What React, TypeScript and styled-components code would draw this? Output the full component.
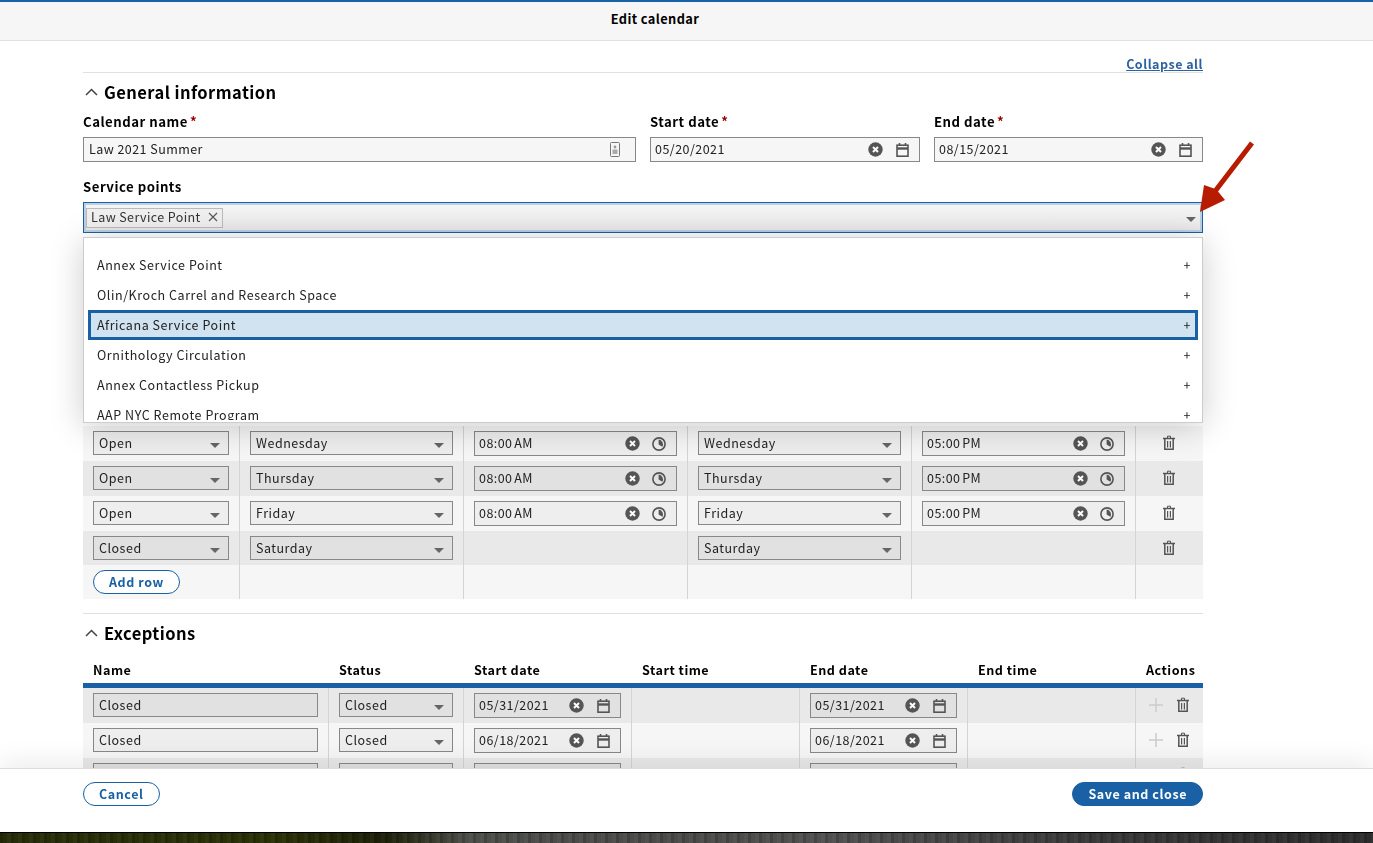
import React from 'react'
import styled, { createGlobalStyle } from 'styled-components'

const BLUE = '#1960a4'

const GlobalStyle = createGlobalStyle`
  html, body, #root {
    margin: 0;
    height: 100%;
    overflow: hidden;
    background: #fff;
  }
  * {
    box-sizing: border-box;
  }
  body {
    font-family: "Noto Sans CJK SC", "Noto Sans", sans-serif;
    font-size: 12.5px;
    letter-spacing: 0.5px;
    color: #222;
  }
`

const Page = styled.div`
  position: relative;
  display: flex;
  flex-direction: column;
  height: 100vh;
  will-change: opacity;
`

const TopBar = styled.header`
  flex: none;
  height: 41px;
  padding: 0 63px 6px 0;
  display: flex;
  align-items: center;
  justify-content: center;
  background: #f6f6f6;
  border-top: 2px solid ${BLUE};
  border-bottom: 1px solid #e0e0e0;
  font-size: 12.8px;
  font-weight: 700;
  letter-spacing: 0.4px;
  color: #000;
`

const Content = styled.main`
  flex: 1;
  min-height: 0;
  overflow: hidden;
  padding: 14px 170px 0 83px;
`

const CollapseRow = styled.div`
  display: flex;
  justify-content: flex-end;
  height: 18px;
  line-height: 18px;
  border-bottom: 1px solid #e0e0e0;
`

const CollapseLink = styled.a`
  color: #2b62a0;
  font-size: 12.5px;
  font-weight: 700;
  text-decoration: underline;
`

const SectionHead = styled.h2`
  display: flex;
  align-items: center;
  gap: 6px;
  margin: 0;
  padding: 7px 0 0 2px;
  height: 31px;
  font-size: 16.5px;
  letter-spacing: 0.44px;
  line-height: 24px;
  font-weight: 700;
  color: #000;
`

const FormGrid = styled.div`
  display: grid;
  grid-template-columns: 553px 270px 269px;
  column-gap: 14px;
  margin-top: 8px;
`

const Field = styled.div`
  display: flex;
  flex-direction: column;
`

const Label = styled.label`
  height: 20px;
  margin-bottom: 5px;
  line-height: 19.5px;
  font-size: 13.2px;
  font-weight: 700;
  color: #000;
`

const Required = styled.span`
  margin-left: 2px;
  color: #990000;
`

const ServiceField = styled.div`
  position: relative;
  margin-top: 15px;
`

const MultiBox = styled.div`
  display: flex;
  align-items: center;
  justify-content: space-between;
  height: 31px;
  padding: 0 6px 0 2px;
  background: linear-gradient(#f6f6f6, #e9e9e9);
  border: 1px solid ${BLUE};
  box-shadow: inset 0 0 0 2px #bcd0e3;
`

const Chip = styled.span`
  display: flex;
  align-items: center;
  gap: 7px;
  height: 20px;
  padding: 0 4px 2px;
  background: #f0f0f0;
  border: 1px solid #bbb;
  letter-spacing: 0.4px;
  color: #333;
`

const Dropdown = styled.div`
  position: absolute;
  z-index: 3;
  top: calc(100% + 4px);
  left: 0;
  right: 0;
  height: 186px;
  padding: 12px 4px 2px;
  background: #fff;
  border: 1px solid #ccc;
  box-shadow: 0 4px 32px rgba(0, 0, 0, 0.2);
`

const OptionList = styled.ul`
  height: 170px;
  margin: 0;
  padding: 0;
  overflow: hidden;
  list-style: none;
`

const Option = styled.li<{ $active?: boolean }>`
  display: flex;
  align-items: center;
  justify-content: space-between;
  height: 30px;
  padding: 0 4px 2px 6px;
  letter-spacing: 0.56px;
  color: #222;
  background: ${p => (p.$active ? '#d1e2f0' : 'transparent')};
  border: 3px solid ${p => (p.$active ? BLUE : 'transparent')};
`

const Table = styled.div<{ $top?: number }>`
  margin-top: ${p => p.$top ?? 0}px;
`

const Row = styled.div<{ $cols: string; $odd?: boolean }>`
  display: grid;
  grid-template-columns: ${p => p.$cols};
  background: ${p => (p.$odd ? '#e9e9e9' : '#f6f6f6')};
`

const Cell = styled.div`
  min-width: 0;
  min-height: 34px;
  padding: 5px 10px;
  border-right: 1px solid #d4d4d4;

  &:last-child {
    border-right: 0;
  }
`

const ActionCell = styled(Cell)`
  display: flex;
  align-items: center;
  justify-content: center;
  gap: 13px;
  padding: 0 1px 1px 0;
`

const Control = styled.div<{ $tall?: boolean }>`
  display: flex;
  align-items: center;
  justify-content: space-between;
  width: 100%;
  height: ${p => (p.$tall ? 25 : 24)}px;
  padding: 0 8px 0 5px;
  letter-spacing: 0.45px;
  color: #222;
  white-space: nowrap;
  background: rgba(0, 0, 0, 0.03);
  border: 1px solid #888;
`

const PickerControl = styled(Control)`
  padding-left: 4px;
  padding-right: 10px;
`

const TopControl = styled(PickerControl)`
  background: #f6f6f6;
`

const NameControl = styled(TopControl)`
  padding-left: 5px;
  padding-right: 15px;
`

const FieldText = styled.span`
  padding-bottom: 2px;
`

const TimeText = styled(FieldText)`
  word-spacing: -1.5px;
`

const SelectText = styled.span`
  padding-bottom: 1px;
  letter-spacing: 0.5px;
`

const IconGroup = styled.span<{ $gap: number }>`
  display: flex;
  align-items: center;
  gap: ${p => p.$gap}px;
`

const HeadRow = styled.div<{ $cols: string }>`
  display: grid;
  grid-template-columns: ${p => p.$cols};
  height: 43px;
  padding-top: 15px;
  border-bottom: 5px solid ${BLUE};
`

const HeadCell = styled.div`
  padding: 0 10px;
  height: 20px;
  line-height: 19px;
  font-size: 12.6px;
  font-weight: 700;
  color: #000;
`

const PillButton = styled.button<{ $primary?: boolean }>`
  height: 24px;
  padding: 0 15px 2px;
  border-radius: 12px;
  border: 1px solid ${BLUE};
  background: ${p => (p.$primary ? BLUE : '#fff')};
  color: ${p => (p.$primary ? '#fff' : BLUE)};
  font-family: inherit;
  font-size: 12.5px;
  font-weight: 700;
  letter-spacing: 0.58px;
`

const Divider = styled.hr`
  height: 1px;
  margin: 14px 0 0;
  border: 0;
  background: #e0e0e0;
`

const Footer = styled.footer`
  position: relative;
  z-index: 2;
  flex: none;
  height: 64px;
  padding: 13px 170px 0 83px;
  display: flex;
  justify-content: space-between;
  align-items: flex-start;
  background: #fff;
  border-top: 1px solid #ddd;
  box-shadow: 0 -8px 24px rgba(0, 0, 0, 0.07);
`

const PhotoStrip = styled.div`
  position: relative;
  z-index: 2;
  flex: none;
  height: 11px;
  border-top: 1px solid #000;
  background:
    repeating-linear-gradient(90deg, rgba(0, 0, 0, 0.14) 0 3px, transparent 3px 7px, rgba(255, 255, 255, 0.03) 7px 11px),
    linear-gradient(90deg, #262c08 0%, #2a3006 20%, #1d2008 28%, #4c4e48 34%, #4a4a48 50%, #505050 60%, #383838 80%, #2c2c2c 100%);
`

const Annotation = styled.svg`
  position: absolute;
  z-index: 5;
  left: 1195px;
  top: 138px;
  pointer-events: none;
`

const Chevron = () => (
  <svg width="13" height="8" viewBox="0 0 13 8" fill="none" stroke="#444" strokeWidth="1.5">
    <path d="M1 7l5.5-5.5L12 7" />
  </svg>
)

const Caret = () => (
  <svg width="10" height="9" viewBox="0 0 10 9" fill="#666">
    <path d="M0 4h10L5 9z" />
  </svg>
)

const ClearIcon = () => (
  <svg width="15" height="15" viewBox="0 0 15 15">
    <circle cx="7.5" cy="7.5" r="7.2" fill="#555" />
    <path d="M5 5l5 5M10 5l-5 5" stroke="#fff" strokeWidth="2" />
  </svg>
)

const CalendarIcon = () => (
  <svg width="13" height="14" viewBox="0 0 13 14" fill="none" stroke="#555">
    <rect x="1" y="2.2" width="11" height="11" strokeWidth="1.6" />
    <path d="M1 5.5h11" strokeWidth="2.4" />
    <path d="M3.5 0v3M9.5 0v3" strokeWidth="1.6" />
  </svg>
)

const ClockIcon = () => (
  <svg width="14" height="14" viewBox="0 0 14 14">
    <circle cx="7" cy="7" r="6.1" fill="none" stroke="#555" strokeWidth="1.6" />
    <path d="M6.6 2.5V7.4l3.8 2.4A5 5 0 0 0 6.6 2.5z" fill="#555" />
  </svg>
)

const TrashIcon = () => (
  <svg width="14" height="16" viewBox="0 0 14 16" fill="none" stroke="#555">
    <path d="M1 3.5h12" strokeWidth="1.5" />
    <path d="M5.5 3V1.2h3V3" strokeWidth="1" />
    <path d="M2.8 4v10.3h8.4V4" strokeWidth="1.5" />
    <path d="M5.6 6v6.5M8.4 6v6.5" strokeWidth="1.2" />
  </svg>
)

const PlusIcon = () => (
  <svg width="14" height="14" viewBox="0 0 14 14" stroke="#ccc" strokeWidth="1.5">
    <path d="M7 0v14M0 7h14" />
  </svg>
)

const CardIcon = () => (
  <svg width="10" height="15" viewBox="0 0 10 15" fill="none">
    <rect x="0.5" y="0.5" width="9" height="14" rx="1" stroke="#777" />
    <circle cx="5" cy="5" r="1.4" fill="#999" />
    <rect x="2.5" y="7.5" width="5" height="4.5" fill="#aaa" />
  </svg>
)

const ChipClose = () => (
  <svg width="10" height="10" viewBox="0 0 10 10" stroke="#555" strokeWidth="1.1">
    <path d="M1 1l8 8M9 1l-8 8" />
  </svg>
)

const DateIcons = () => (
  <IconGroup $gap={13}>
    <ClearIcon />
    <CalendarIcon />
  </IconGroup>
)

const DateControl: React.FC<{ value?: string }> = ({ value }) => (
  <PickerControl $tall>
    <FieldText>{value}</FieldText>
    <DateIcons />
  </PickerControl>
)

const TimeControl: React.FC<{ value: string }> = ({ value }) => (
  <PickerControl $tall>
    <TimeText>{value}</TimeText>
    <IconGroup $gap={12}>
      <ClearIcon />
      <ClockIcon />
    </IconGroup>
  </PickerControl>
)

const Select: React.FC<{ value?: string }> = ({ value }) => (
  <Control>
    <SelectText>{value}</SelectText>
    <Caret />
  </Control>
)

const hoursCols = '157px 224px 224px 224px 224px 67px'
const exceptionCols = '246px 135px 168px 168px 168px 168px 67px'

const options = [
  'Annex Service Point',
  'Olin/Kroch Carrel and Research Space',
  'Africana Service Point',
  'Ornithology Circulation',
  'Annex Contactless Pickup',
  'AAP NYC Remote Program',
]

// the rows above Wednesday are hidden by the open dropdown
const hours = [
  { status: 'Open', day: 'Wednesday', start: '08:00 AM', end: '05:00 PM' },
  { status: 'Open', day: 'Thursday', start: '08:00 AM', end: '05:00 PM' },
  { status: 'Open', day: 'Friday', start: '08:00 AM', end: '05:00 PM' },
  { status: 'Closed', day: 'Saturday' },
]

const exceptions = [
  { name: 'Closed', status: 'Closed', start: '05/31/2021', end: '05/31/2021' },
  { name: 'Closed', status: 'Closed', start: '06/18/2021', end: '06/18/2021' },
  { name: '', status: '', start: '', end: '' },
]

const exceptionHead = ['Name', 'Status', 'Start date', 'Start time', 'End date', 'End time', 'Actions']

export default function App() {
  return (
    <Page>
      <GlobalStyle />
      <TopBar>Edit calendar</TopBar>

      <Content>
        <CollapseRow>
          <CollapseLink>Collapse all</CollapseLink>
        </CollapseRow>

        <SectionHead>
          <Chevron />
          General information
        </SectionHead>

        <FormGrid>
          <Field>
            <Label>
              Calendar name<Required>*</Required>
            </Label>
            <NameControl $tall>
              <FieldText>Law 2021 Summer</FieldText>
              <CardIcon />
            </NameControl>
          </Field>
          <Field>
            <Label>
              Start date<Required>*</Required>
            </Label>
            <TopControl $tall>
              <FieldText>05/20/2021</FieldText>
              <DateIcons />
            </TopControl>
          </Field>
          <Field>
            <Label>
              End date<Required>*</Required>
            </Label>
            <TopControl $tall>
              <FieldText>08/15/2021</FieldText>
              <DateIcons />
            </TopControl>
          </Field>
        </FormGrid>

        <ServiceField>
          <Label as="div">Service points</Label>
          <MultiBox>
            <Chip>
              Law Service Point
              <ChipClose />
            </Chip>
            <Caret />
          </MultiBox>
          <Dropdown>
            <OptionList>
              {options.map((name, i) => (
                <Option key={name} $active={i === 2}>
                  {name}
                  <span>+</span>
                </Option>
              ))}
            </OptionList>
          </Dropdown>
        </ServiceField>

        <Table $top={193}>
          {hours.map((row, i) => (
            <Row key={row.day} $cols={hoursCols} $odd={i % 2 === 1}>
              <Cell>
                <Select value={row.status} />
              </Cell>
              <Cell>
                <Select value={row.day} />
              </Cell>
              <Cell>{row.start && <TimeControl value={row.start} />}</Cell>
              <Cell>
                <Select value={row.day} />
              </Cell>
              <Cell>{row.end && <TimeControl value={row.end} />}</Cell>
              <ActionCell>
                <TrashIcon />
              </ActionCell>
            </Row>
          ))}
          <Row $cols={hoursCols}>
            <Cell>
              <PillButton>Add row</PillButton>
            </Cell>
            <Cell />
            <Cell />
            <Cell />
            <Cell />
            <Cell />
          </Row>
        </Table>

        <Divider />

        <SectionHead>
          <Chevron />
          Exceptions
        </SectionHead>

        <Table>
          <HeadRow $cols={exceptionCols}>
            {exceptionHead.map(title => (
              <HeadCell key={title}>{title}</HeadCell>
            ))}
          </HeadRow>
          {exceptions.map((row, i) => (
            <Row key={i} $cols={exceptionCols} $odd={i % 2 === 0}>
              <Cell>
                <Control>
                  <SelectText>{row.name}</SelectText>
                </Control>
              </Cell>
              <Cell>
                <Select value={row.status} />
              </Cell>
              <Cell>
                <DateControl value={row.start} />
              </Cell>
              <Cell />
              <Cell>
                <DateControl value={row.end} />
              </Cell>
              <Cell />
              <ActionCell>
                <PlusIcon />
                <TrashIcon />
              </ActionCell>
            </Row>
          ))}
        </Table>
      </Content>

      <Footer>
        <PillButton>Cancel</PillButton>
        <PillButton $primary>Save and close</PillButton>
      </Footer>
      <PhotoStrip />

      <Annotation width="62" height="78" viewBox="1195 138 62 78">
        <path d="M1250 141.5L1254 144.5 1218 191.5 1225 200 1200 212 1204 185 1214 188.5z" fill="#b71c00" />
      </Annotation>
    </Page>
  )
}
